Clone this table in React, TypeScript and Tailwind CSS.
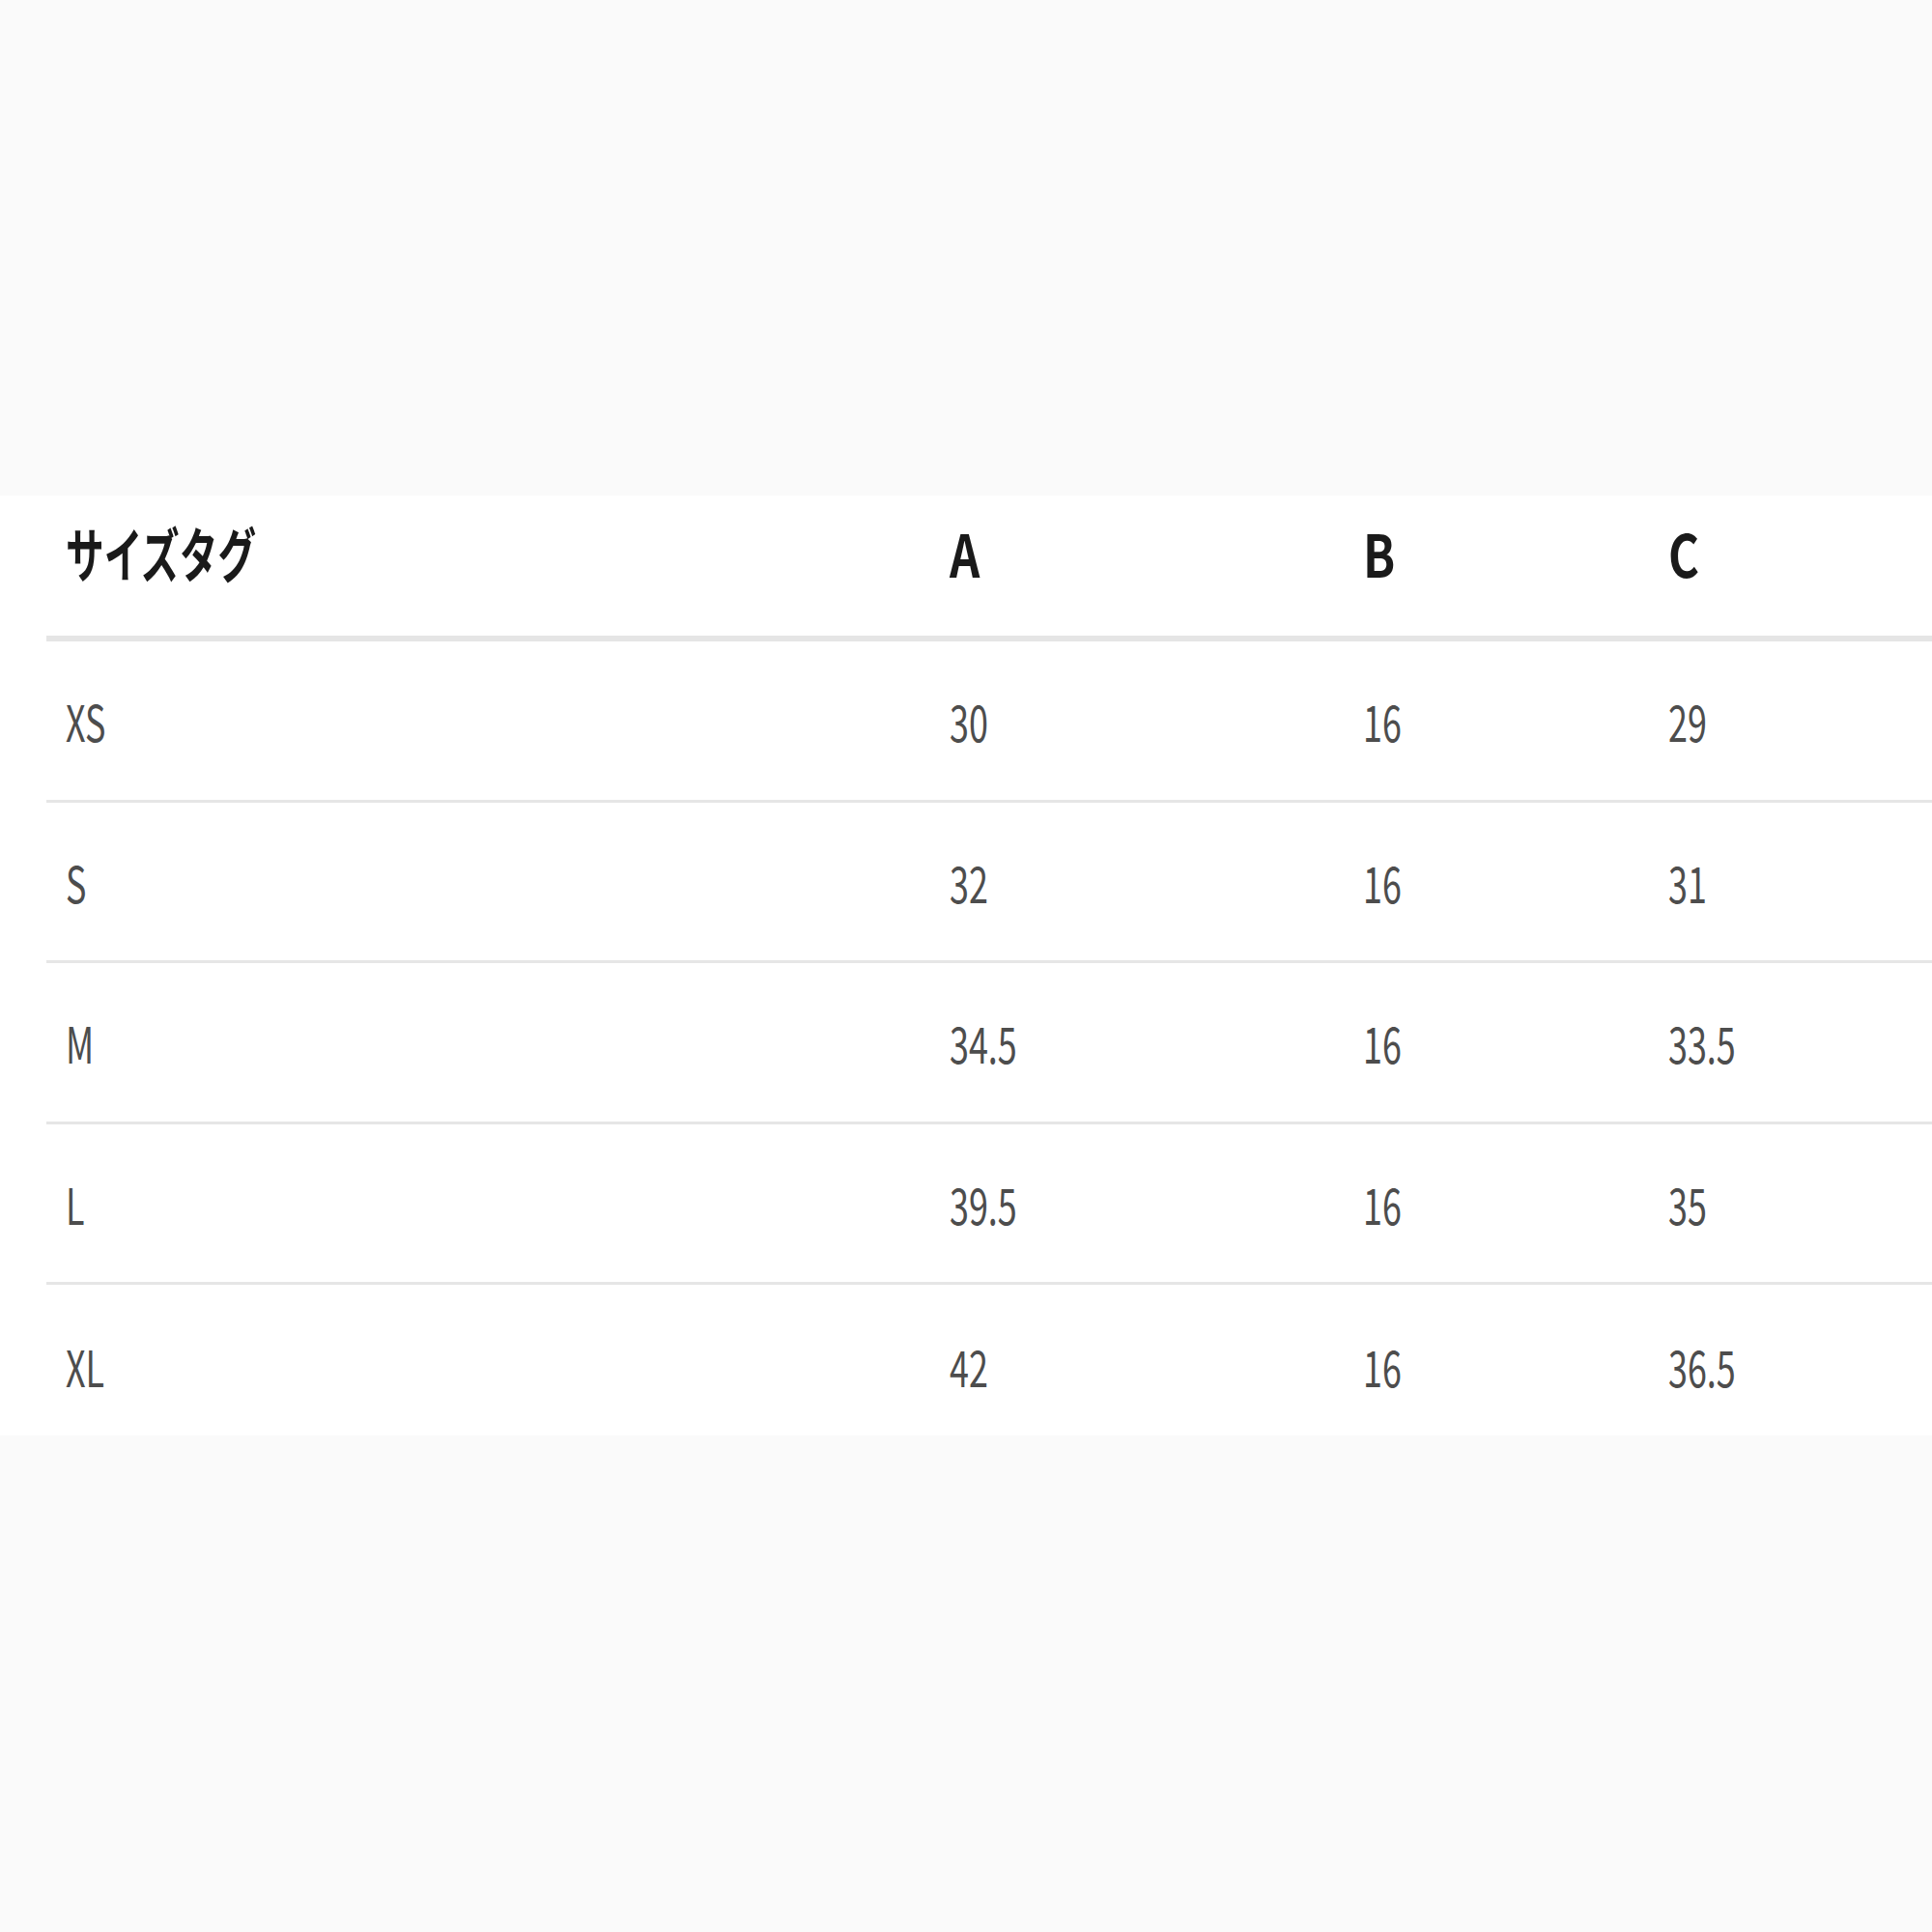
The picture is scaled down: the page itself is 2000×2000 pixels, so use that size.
import React from "react";

const rows = [
  ["XS", "30", "16", "29"],
  ["S", "32", "16", "31"],
  ["M", "34.5", "16", "33.5"],
  ["L", "39.5", "16", "35"],
  ["XL", "42", "16", "36.5"],
];

const heights = ["h-[167px]", "h-[166px]", "h-[167px]", "h-[166px]", "h-[168px]"];

const font = { fontFamily: '"Noto Sans CJK JP", "Noto Sans", sans-serif' };

function Cell({ children, head, kana }: { children: React.ReactNode; head?: boolean; kana?: boolean }) {
  let cls = "inline-block origin-left scale-x-[0.69] text-[52px] text-[#4d4d4d] leading-none";
  if (head && kana) cls = "inline-block origin-left scale-x-[0.65] text-[61px] font-bold text-[#1a1a1a] leading-none";
  else if (head) cls = "inline-block origin-left scale-x-[0.8] text-[61px] font-bold text-[#1a1a1a] leading-none";
  return (
    <div className="pl-[20px] flex items-center">
      <span className={cls}>{children}</span>
    </div>
  );
}

export default function App() {
  return (
    <div className="w-[2000px] h-[2000px] bg-[#fafafa] overflow-hidden pt-[513px]" style={font}>
      <div className="bg-white h-[973px] pl-[48px] overflow-hidden">
        <div className="w-[2100px]">
          <div className="grid grid-cols-[915px_428px_316px_441px] h-[151px] pb-[28px] border-b-[6px] border-[#e5e5e5]">
            <Cell head kana>サイズタグ</Cell>
            <Cell head>A</Cell>
            <Cell head>B</Cell>
            <Cell head>C</Cell>
          </div>
          {rows.map((r, i) => (
            <div
              key={i}
              className={
                "grid grid-cols-[915px_428px_316px_441px] " +
                heights[i] +
                (i < rows.length - 1 ? " border-b-[3px] border-[#e6e6e6]" : "")
              }
            >
              {r.map((c, j) => (
                <Cell key={j}>{c}</Cell>
              ))}
            </div>
          ))}
        </div>
      </div>
    </div>
  );
}
